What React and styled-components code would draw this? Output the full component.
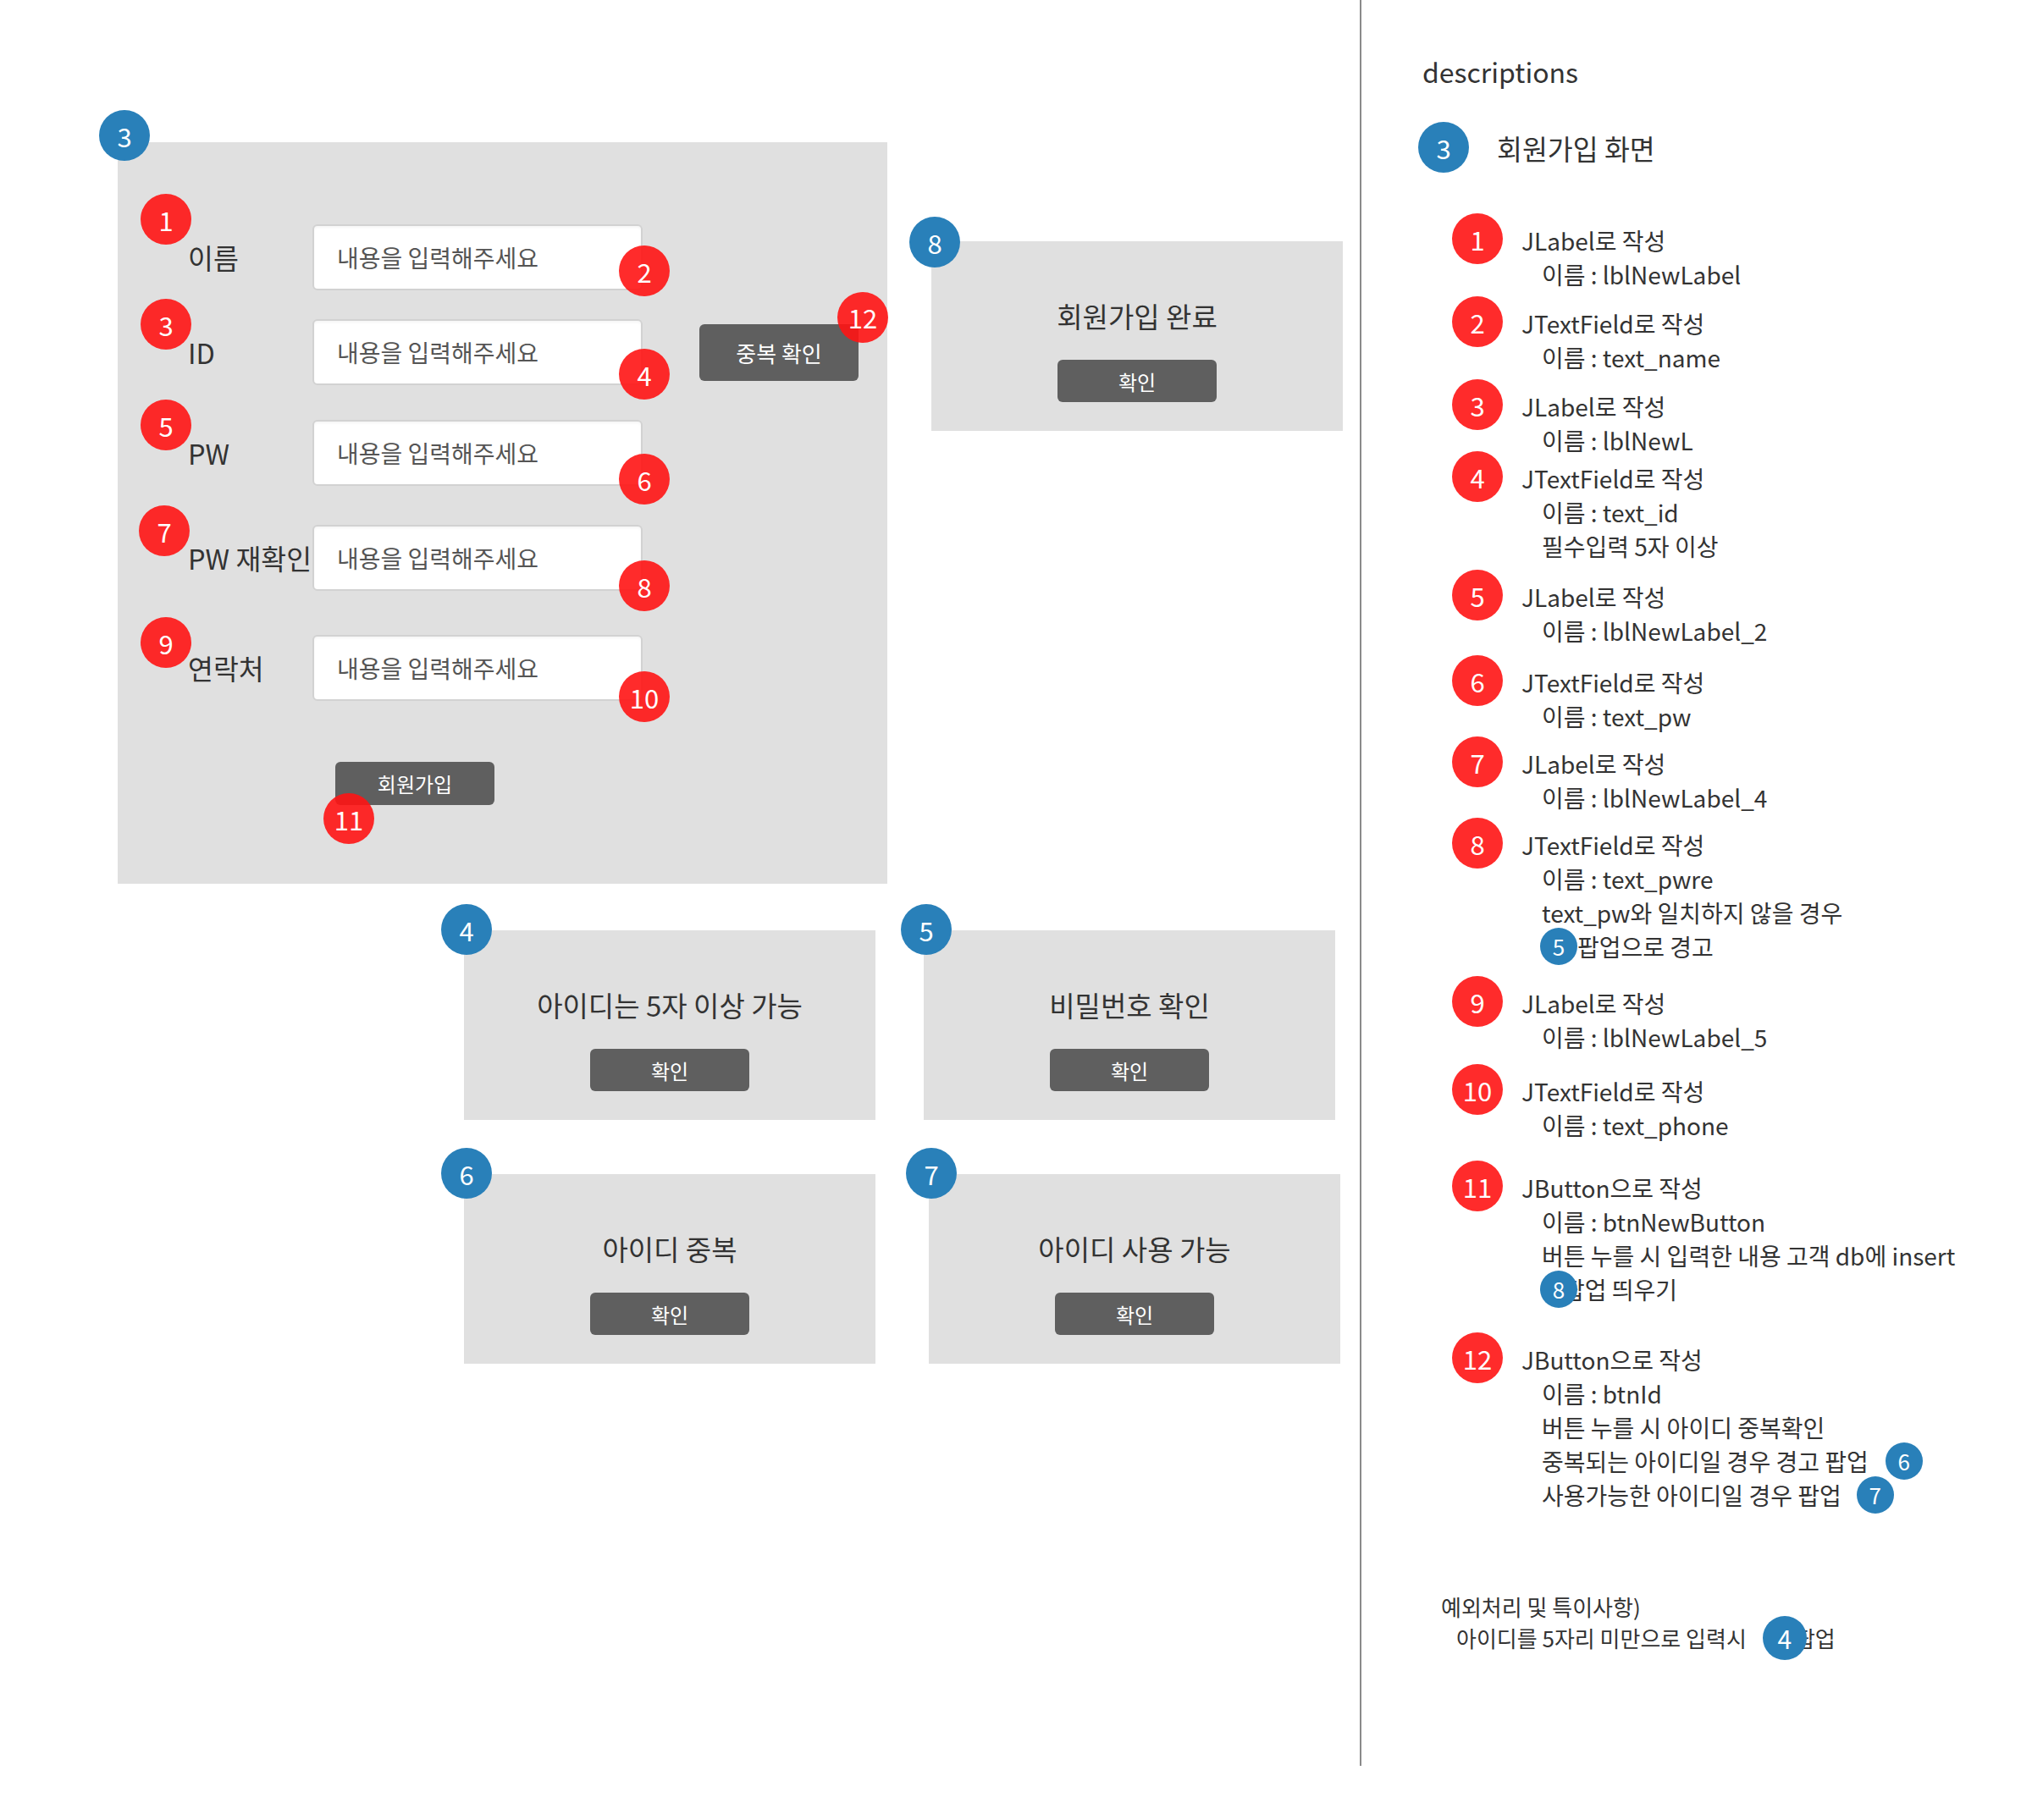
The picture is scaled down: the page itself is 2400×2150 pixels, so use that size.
import React from 'react';
import styled, { createGlobalStyle } from 'styled-components';

const RED = 'rgba(255, 20, 20, 0.9)';
const BLUE = '#2980b9';
const PANEL = '#e0e0e0';
const INK = '#333333';

const GlobalStyle = createGlobalStyle`
  html, body { margin: 0; padding: 0; background: #ffffff; }
  body {
    font-family: "Noto Sans CJK KR", "Noto Sans", sans-serif;
    color: ${INK};
  }
  * { box-sizing: border-box; }
`;

const Page = styled.div`
  display: flex;
  align-items: flex-start;
  width: 2400px;
  min-height: 2150px;
`;

const Canvas = styled.main`
  flex: none;
  width: 1606px;
  padding: 168px 0 0 139px;
`;

const Divider = styled.div`
  flex: none;
  width: 2px;
  height: 2086px;
  background: #8a8a8a;
`;

const Desc = styled.aside`
  flex: 1;
  padding: 64px 0 0 67px;
`;

/* ---------- badges ---------- */
const Dot = styled.span`
  flex: none;
  display: inline-flex;
  align-items: center;
  justify-content: center;
  width: ${(p) => p.$size || 60}px;
  height: ${(p) => p.$size || 60}px;
  border-radius: 50%;
  background: ${(p) => (p.$tone === 'blue' ? BLUE : RED)};
  color: #ffffff;
  font-size: ${(p) => p.$fs || 31}px;
  line-height: 1;
  position: relative;
  z-index: 2;
`;

const PinDot = styled(Dot)`
  position: absolute;
  left: ${(p) => p.$x}px;
  top: ${(p) => p.$y}px;
`;

/* ---------- canvas ---------- */
const TopRow = styled.div`
  display: flex;
  align-items: flex-start;
`;

const MainPanel = styled.section`
  position: relative;
  flex: none;
  width: 909px;
  height: 876px;
  background: ${PANEL};
  padding: 97px 0 0 83px;
`;

const FormRow = styled.div`
  display: flex;
  align-items: center;
  height: 78px;
  margin-top: ${(p) => p.$gap || 0}px;
`;

const FieldLabel = styled.label`
  position: relative;
  flex: none;
  width: 147px;
  font-size: 32.5px;
  line-height: 40px;
  white-space: nowrap;
  color: ${INK};
`;

const FieldWrap = styled.div`
  position: relative;
  flex: none;
  width: 390px;
  height: 78px;
`;

const TextInput = styled.input`
  width: 100%;
  height: 100%;
  border: 2px solid #d2d2d2;
  border-radius: 6px;
  background: #ffffff;
  box-shadow: inset 0 2px 3px rgba(0, 0, 0, 0.04);
  padding: 0 0 0 27px;
  font-family: inherit;
  font-size: 28px;
  color: ${INK};
  outline: none;
  &::placeholder {
    color: #555555;
  }
`;

const ButtonWrap = styled.div`
  position: relative;
  flex: none;
  margin-left: ${(p) => p.$ml || 0}px;
  margin-top: ${(p) => p.$mt || 0}px;
  width: 188px;
`;

const DarkButton = styled.button`
  display: block;
  width: 188px;
  height: ${(p) => p.$h}px;
  border: none;
  border-radius: 6px;
  background: #5f5f5f;
  color: #ffffff;
  font-family: inherit;
  font-size: ${(p) => p.$fs}px;
  padding: 0;
`;

const Popup = styled.section`
  position: relative;
  flex: none;
  width: 486px;
  height: 224px;
  background: ${PANEL};
  display: flex;
  flex-direction: column;
  align-items: center;
  padding-top: 68px;
  margin-top: ${(p) => p.$mt || 0}px;
  margin-left: ${(p) => p.$ml || 0}px;
`;

const PopupTitle = styled.div`
  font-size: 33px;
  line-height: 40px;
  color: ${INK};
  margin-bottom: 32px;
`;

const PopupGrid = styled.div`
  display: grid;
  grid-template-columns: 486px 486px;
  column-gap: 57px;
  row-gap: 64px;
  margin: 55px 0 0 409px;
`;

/* ---------- descriptions ---------- */
const DescTitle = styled.h2`
  margin: 0 0 0 5px;
  font-size: 32px;
  font-weight: 400;
  line-height: 40px;
  color: ${INK};
`;

const SectionHead = styled.div`
  display: flex;
  align-items: center;
  gap: 33px;
  margin-top: 40px;
  font-size: 32.5px;
`;

const ItemList = styled.ol`
  list-style: none;
  margin: 48px 0 0 40px;
  padding: 0;
`;

const Item = styled.li`
  display: flex;
  align-items: flex-start;
  gap: 22px;
  margin-top: ${(p) => p.$gap}px;
`;

const Lines = styled.div`
  margin-top: 12px;
  font-size: 28px;
  line-height: 40px;
`;

const Line = styled.div`
  display: flex;
  align-items: center;
  height: 40px;
  padding-left: ${(p) => (p.$indent ? 24 : 0)}px;
  white-space: pre;
`;

const InlineDot = styled(Dot)`
  margin: 0 ${(p) => p.$mr || 0}px 0 ${(p) => p.$ml || 0}px;
`;

const Footnote = styled.div`
  margin: 93px 0 0 27px;
  font-size: 26px;
  line-height: 37px;
`;

const FootLine = styled.div`
  display: flex;
  align-items: center;
  height: 37px;
  padding-left: ${(p) => (p.$indent ? 18 : 0)}px;
  white-space: pre;
`;

const fields = [
  { label: '이름', n: 1, ld: -55, fn: 2, fd: 25, gap: 0 },
  { label: 'ID', n: 3, ld: -43, fn: 4, fd: 35, gap: 34, dup: true },
  { label: 'PW', n: 5, ld: -43, fn: 6, fd: 40, gap: 41 },
  { label: 'PW 재확인', n: 7, ld: -42, fn: 8, fd: 42, gap: 46, lx: -58 },
  { label: '연락처', n: 9, ld: -40, fn: 10, fd: 43, gap: 52 },
];

const popups = [
  { n: 4, title: '아이디는 5자 이상 가능' },
  { n: 5, title: '비밀번호 확인' },
  { n: 6, title: '아이디 중복' },
  { n: 7, title: '아이디 사용 가능', ml: 6 },
];

function FormField({ f }) {
  return (
    <FormRow $gap={f.gap}>
      <FieldLabel>
        <PinDot $x={f.lx ?? -56} $y={f.ld}>{f.n}</PinDot>
        {f.label}
      </FieldLabel>
      <FieldWrap>
        <TextInput readOnly placeholder="내용을 입력해주세요" />
        <PinDot $x={362} $y={f.fd}>{f.fn}</PinDot>
      </FieldWrap>
      {f.dup && (
        <ButtonWrap $ml={67}>
          <DarkButton $h={67} $fs={26}>중복 확인</DarkButton>
          <PinDot $x={163} $y={-38}>12</PinDot>
        </ButtonWrap>
      )}
    </FormRow>
  );
}

function PopupBox({ n, title, mt, ml, dx = -27, dy = -31 }) {
  return (
    <Popup $mt={mt} $ml={ml}>
      <PinDot $tone="blue" $x={dx} $y={dy}>{n}</PinDot>
      <PopupTitle>{title}</PopupTitle>
      <DarkButton $h={50} $fs={24}>확인</DarkButton>
    </Popup>
  );
}

export default function App() {
  return (
    <>
      <GlobalStyle />
      <Page>
        <Canvas>
          <TopRow>
            <MainPanel>
              <PinDot $tone="blue" $x={-22} $y={-38}>3</PinDot>
              {fields.map((f) => (
                <FormField key={f.n} f={f} />
              ))}
              <ButtonWrap $ml={174} $mt={72}>
                <DarkButton $h={51} $fs={24}>회원가입</DarkButton>
                <PinDot $x={-14} $y={37}>11</PinDot>
              </ButtonWrap>
            </MainPanel>
            <PopupBox n={8} title="회원가입 완료" mt={117} ml={52} dx={-26} dy={-29} />
          </TopRow>
          <PopupGrid>
            {popups.map((p) => (
              <PopupBox key={p.n} n={p.n} title={p.title} ml={p.ml} />
            ))}
          </PopupGrid>
        </Canvas>

        <Divider />

        <Desc>
          <DescTitle>descriptions</DescTitle>
          <SectionHead>
            <Dot $tone="blue">3</Dot>
            <span>회원가입 화면</span>
          </SectionHead>

          <ItemList>
            <Item $gap={0}>
              <Dot>1</Dot>
              <Lines>
                <Line>JLabel로 작성</Line>
                <Line $indent>이름 : lblNewLabel</Line>
              </Lines>
            </Item>
            <Item $gap={6}>
              <Dot>2</Dot>
              <Lines>
                <Line>JTextField로 작성</Line>
                <Line $indent>이름 : text_name</Line>
              </Lines>
            </Item>
            <Item $gap={6}>
              <Dot>3</Dot>
              <Lines>
                <Line>JLabel로 작성</Line>
                <Line $indent>이름 : lblNewL</Line>
              </Lines>
            </Item>
            <Item $gap={-7}>
              <Dot>4</Dot>
              <Lines>
                <Line>JTextField로 작성</Line>
                <Line $indent>이름 : text_id</Line>
                <Line $indent>필수입력 5자 이상</Line>
              </Lines>
            </Item>
            <Item $gap={8}>
              <Dot>5</Dot>
              <Lines>
                <Line>JLabel로 작성</Line>
                <Line $indent>이름 : lblNewLabel_2</Line>
              </Lines>
            </Item>
            <Item $gap={9}>
              <Dot>6</Dot>
              <Lines>
                <Line>JTextField로 작성</Line>
                <Line $indent>이름 : text_pw</Line>
              </Lines>
            </Item>
            <Item $gap={4}>
              <Dot>7</Dot>
              <Lines>
                <Line>JLabel로 작성</Line>
                <Line $indent>이름 : lblNewLabel_4</Line>
              </Lines>
            </Item>
            <Item $gap={4}>
              <Dot>8</Dot>
              <Lines>
                <Line>JTextField로 작성</Line>
                <Line $indent>이름 : text_pwre</Line>
                <Line $indent>text_pw와 일치하지 않을 경우</Line>
                <Line $indent>
                  <InlineDot $tone="blue" $size={44} $fs={26} $ml={-2}>5</InlineDot>
                  팝업으로 경고
                </Line>
              </Lines>
            </Item>
            <Item $gap={15}>
              <Dot>9</Dot>
              <Lines>
                <Line>JLabel로 작성</Line>
                <Line $indent>이름 : lblNewLabel_5</Line>
              </Lines>
            </Item>
            <Item $gap={12}>
              <Dot>10</Dot>
              <Lines>
                <Line>JTextField로 작성</Line>
                <Line $indent>이름 : text_phone</Line>
              </Lines>
            </Item>
            <Item $gap={22}>
              <Dot>11</Dot>
              <Lines>
                <Line>JButton으로 작성</Line>
                <Line $indent>이름 : btnNewButton</Line>
                <Line $indent>버튼 누를 시 입력한 내용 고객 db에 insert</Line>
                <Line $indent>
                  <InlineDot $tone="blue" $size={44} $fs={26} $ml={-2} $mr={-17}>8</InlineDot>
                  팝업 띄우기
                </Line>
              </Lines>
            </Item>
            <Item $gap={31}>
              <Dot>12</Dot>
              <Lines>
                <Line>JButton으로 작성</Line>
                <Line $indent>이름 : btnId</Line>
                <Line $indent>버튼 누를 시 아이디 중복확인</Line>
                <Line $indent>
                  중복되는 아이디일 경우 경고 팝업
                  <InlineDot $tone="blue" $size={44} $fs={26} $ml={20}>6</InlineDot>
                </Line>
                <Line $indent>
                  사용가능한 아이디일 경우 팝업
                  <InlineDot $tone="blue" $size={44} $fs={26} $ml={18}>7</InlineDot>
                </Line>
              </Lines>
            </Item>
          </ItemList>

          <Footnote>
            <FootLine>예외처리 및 특이사항)</FootLine>
            <FootLine $indent>
              아이디를 5자리 미만으로 입력시
              <InlineDot $tone="blue" $size={52} $fs={30} $ml={19} $mr={-14}>4</InlineDot>
              팝업
            </FootLine>
          </Footnote>
        </Desc>
      </Page>
    </>
  );
}
